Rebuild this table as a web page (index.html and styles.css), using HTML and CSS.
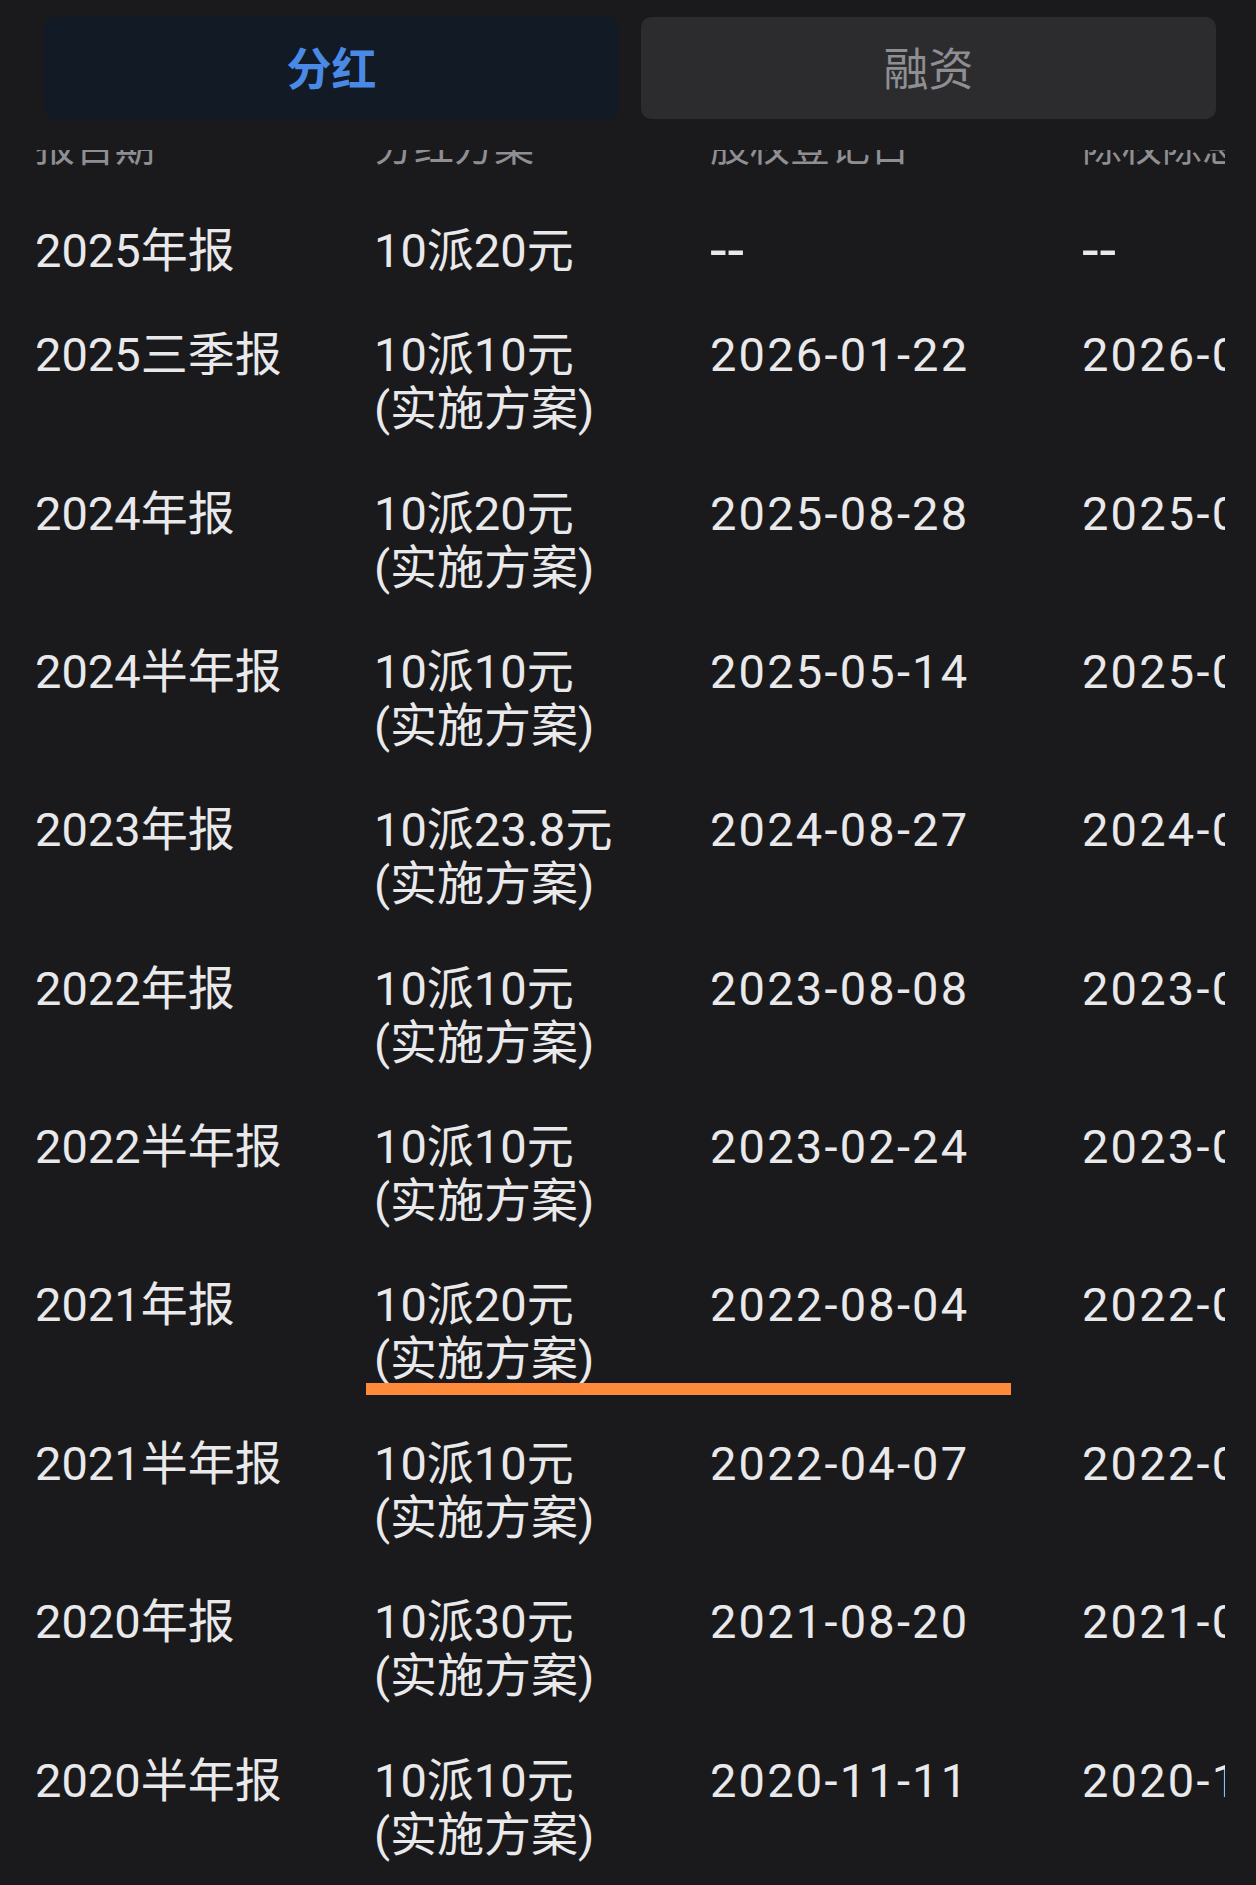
FILE: index.html
```html
<!DOCTYPE html>
<html lang="zh-CN">
<head>
    <meta charset="UTF-8">
    <meta name="viewport" content="width=device-width, initial-scale=1.0">
    <title>分红</title>
    <link rel="stylesheet" href="styles.css">
</head>
<body>
    <div class="tabs">
        <div class="tab active">分红</div>
        <div class="tab">融资</div>
    </div>

    <div class="viewport">
        <div class="row head">
            <div>报告期</div>
            <div>分红方案</div>
            <div>股权登记日</div>
            <div>除权除息日</div>
        </div>

        <div class="row">
            <div>2025年报</div>
            <div>10派20元</div>
            <div class="date empty">--</div>
            <div class="date empty">--</div>
        </div>
        <div class="row">
            <div>2025三季报</div>
            <div>10派10元<br>(实施方案)</div>
            <div class="date">2026-01-22</div>
            <div class="date">2026-01-23</div>
        </div>
        <div class="row">
            <div>2024年报</div>
            <div>10派20元<br>(实施方案)</div>
            <div class="date">2025-08-28</div>
            <div class="date">2025-08-29</div>
        </div>
        <div class="row">
            <div>2024半年报</div>
            <div>10派10元<br>(实施方案)</div>
            <div class="date">2025-05-14</div>
            <div class="date">2025-05-15</div>
        </div>
        <div class="row">
            <div>2023年报</div>
            <div>10派23.8元<br>(实施方案)</div>
            <div class="date">2024-08-27</div>
            <div class="date">2024-08-28</div>
        </div>
        <div class="row">
            <div>2022年报</div>
            <div>10派10元<br>(实施方案)</div>
            <div class="date">2023-08-08</div>
            <div class="date">2023-08-09</div>
        </div>
        <div class="row">
            <div>2022半年报</div>
            <div>10派10元<br>(实施方案)</div>
            <div class="date">2023-02-24</div>
            <div class="date">2023-02-27</div>
        </div>
        <div class="row marked">
            <div>2021年报</div>
            <div>10派20元<br>(实施方案)</div>
            <div class="date">2022-08-04</div>
            <div class="date">2022-08-05</div>
            <span class="underline"></span>
        </div>
        <div class="row">
            <div>2021半年报</div>
            <div>10派10元<br>(实施方案)</div>
            <div class="date">2022-04-07</div>
            <div class="date">2022-04-08</div>
        </div>
        <div class="row">
            <div>2020年报</div>
            <div>10派30元<br>(实施方案)</div>
            <div class="date">2021-08-20</div>
            <div class="date">2021-08-23</div>
        </div>
        <div class="row">
            <div>2020半年报</div>
            <div>10派10元<br>(实施方案)</div>
            <div class="date">2020-11-11</div>
            <div class="date">2020-11-12</div>
        </div>
    </div>
</body>
</html>
```

FILE: styles.css
```css
body {
    margin: 0;
    background-color: #1a1a1c;
    color: #e9e9eb;
    font-family: Roboto, "Noto Sans CJK SC", sans-serif;
    overflow: hidden;
}
.tabs {
    display: flex;
    gap: 22px;
    padding: 17px 40px 0 44px;
}
.tab {
    flex: 1;
    height: 102px;
    box-sizing: border-box;
    padding-bottom: 4px;
    display: flex;
    align-items: center;
    justify-content: center;
    border-radius: 10px;
    background: #2c2c2e;
    color: #8e8e93;
    font-family: "Noto Sans CJK SC", sans-serif;
    font-size: 45px;
}
.tab.active {
    background: #111a25;
    color: #4a8ae6;
    font-weight: bold;
}
.viewport {
    width: 1225px;
    margin-top: 31px;
    overflow: hidden;
}
.row {
    position: relative;
    display: grid;
    grid-template-columns: 339px 336px 372px 320px;
    padding: 25.2px 0 25.2px 35px;
    font-size: 47px;
    line-height: 54px;
    white-space: nowrap;
}
.row.head {
    margin-top: -26px;
    padding-top: 0;
    padding-bottom: 34.6px;
    font-family: "Noto Sans CJK SC", sans-serif;
    font-size: 40px;
    line-height: 40px;
    color: #8e8e93;
}
.date {
    letter-spacing: 2.2px;
}
.date.empty {
    font-size: 60px;
    letter-spacing: 1px;
}
.underline {
    position: absolute;
    left: 366px;
    top: 130px;
    width: 645px;
    height: 12px;
    background: #ff8a3a;
}
```
